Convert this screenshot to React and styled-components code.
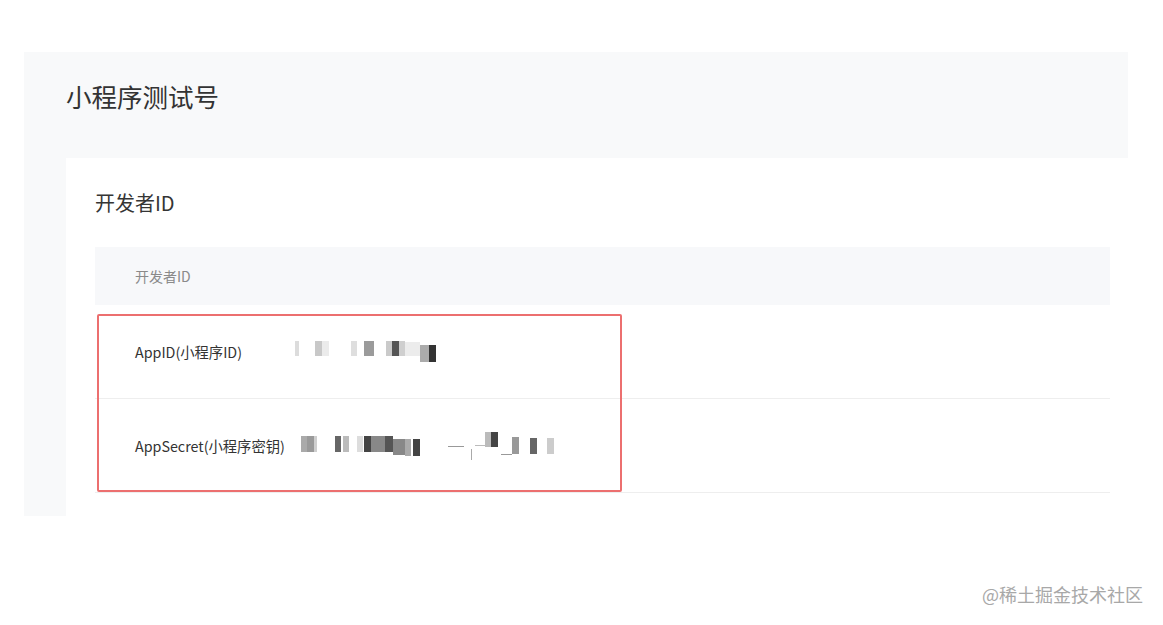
import React from 'react';
import styled, { createGlobalStyle } from 'styled-components';

const GlobalStyle = createGlobalStyle`
  body {
    margin: 0;
    background: #fff;
    font-family: "Noto Sans CJK SC", "Noto Sans", sans-serif;
    color: #333;
  }
`

const blocksId = [
  [3, 341, 4, 15, '#dcdcdc'],
  [23, 341, 7, 15, '#c8c8c8'],
  [30, 341, 7, 15, '#ebebeb'],
  [59, 341, 6, 15, '#dedede'],
  [72, 341, 10, 15, '#9b9b9b'],
  [94, 341, 6, 15, '#cacaca'],
  [100, 341, 7, 15, '#555'],
  [107, 341, 6, 15, '#cfcfcf'],
  [113, 342, 15, 14, '#ececec'],
  [128, 345, 9, 17, '#ababab'],
  [137, 345, 7, 17, '#333'],
]

const blocksSecret = [
  [0, 434, 6, 16, '#aaa'],
  [6, 434, 7, 16, '#9a9a9a'],
  [13, 434, 3, 16, '#cfcfcf'],
  [34, 434, 6, 16, '#666'],
  [42, 434, 6, 16, '#bbb'],
  [56, 434, 6, 16, '#ddd'],
  [63, 434, 7, 16, '#444'],
  [70, 434, 14, 16, '#888'],
  [84, 434, 8, 16, '#555'],
  [92, 437, 12, 16, '#888'],
  [104, 437, 6, 17, '#aaa'],
  [112, 437, 7, 17, '#444'],
  [147, 444, 16, 1, '#999'],
  [170, 447, 1, 11, '#aaa'],
  [174, 443, 10, 1, '#bbb'],
  [184, 430, 6, 15, '#bbb'],
  [190, 430, 7, 15, '#444'],
  [200, 452, 11, 1, '#999'],
  [211, 435, 7, 17, '#999'],
  [229, 436, 7, 16, '#666'],
  [246, 436, 7, 16, '#ccc'],
]

const Masked = ({ blocks, top, width }) => (
  <svg width={width} height='34' viewBox={`0 ${top} ${width} 34`}>
    {blocks.map(([x, y, w, h, c], i) => (
      <rect key={i} x={x} y={y} width={w} height={h} fill={c} />
    ))}
  </svg>
)

const App = () => {
  return (
    <Page>
      <GlobalStyle />
      <Panel>
        <PageTitle>小程序测试号</PageTitle>
        <Card>
          <CardTitle>开发者ID</CardTitle>
          <Table>
            <HeadRow>开发者ID</HeadRow>
            <Body>
              <Row>
                <Label>AppID(小程序ID)</Label>
                <Masked blocks={blocksId} top={335} width={150} />
              </Row>
              <Row>
                <Label>AppSecret(小程序密钥)</Label>
                <Masked blocks={blocksSecret} top={427} width={260} />
              </Row>
              <Highlight />
            </Body>
          </Table>
        </Card>
      </Panel>
      <Watermark>@稀土掘金技术社区</Watermark>
    </Page>
  )
}

const Page = styled.div`
  position: relative;
  min-height: 625px;
  padding: 52px 0 0 24px;
  box-sizing: border-box;
`
const Panel = styled.div`
  width: 1104px;
  height: 464px;
  background: #f8f9fa;
  display: flex;
  flex-direction: column;
`
const PageTitle = styled.h1`
  margin: 0;
  height: 106px;
  padding-left: 42px;
  display: flex;
  align-items: center;
  padding-bottom: 20px;
  box-sizing: border-box;
  font-size: 25.5px;
  font-weight: 400;
  color: #333;
`
const Card = styled.div`
  flex: 1;
  margin-left: 42px;
  background: #fff;
  padding: 0 18px 0 29px;
`
const CardTitle = styled.h2`
  margin: 0;
  height: 89px;
  display: flex;
  align-items: center;
  font-size: 20px;
  font-weight: 400;
  color: #353535;
`
const Table = styled.div`
  display: flex;
  flex-direction: column;
`
const HeadRow = styled.div`
  height: 58px;
  background: #f7f8fa;
  display: flex;
  align-items: center;
  padding-left: 40px;
  font-size: 14px;
  color: #8a8a8a;
`
const Body = styled.div`
  position: relative;
`
const Row = styled.div`
  height: 93px;
  display: flex;
  align-items: center;
  padding-left: 40px;
  border-bottom: 1px solid #eeeeee;
`
const Label = styled.span`
  min-width: 141px;
  margin-right: 16px;
  font-size: 14.3px;
  color: #333;
  white-space: nowrap;
`
const Highlight = styled.div`
  position: absolute;
  left: 2px;
  top: 9px;
  width: 525px;
  height: 178px;
  border: 2px solid #ec6f6f;
  border-radius: 2px;
  box-sizing: border-box;
`
const Watermark = styled.div`
  position: absolute;
  right: 20px;
  bottom: 18px;
  font-size: 18px;
  color: #a8a8a8;
`

export default App;
